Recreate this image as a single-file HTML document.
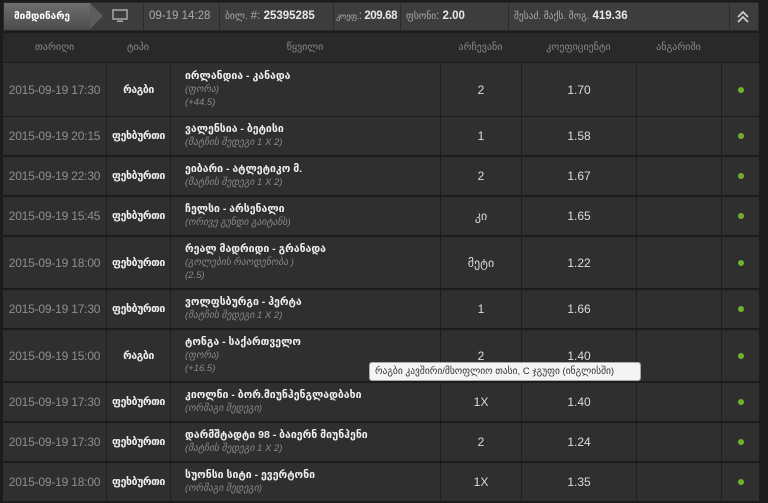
<!DOCTYPE html>
<html><head><meta charset="utf-8"><style>
*{margin:0;padding:0;box-sizing:border-box}
body{width:768px;height:503px;overflow:hidden;background:#1c1c1c;font-family:"Liberation Sans","DejaVu Sans",sans-serif;position:relative}
.top{position:absolute;left:3px;top:2px;width:756px;height:29px;background:#3d3d3d;border:1px solid #2a2a2a}
.tab{position:absolute;left:0;top:0;height:27px;width:86px;background:linear-gradient(#6e6e6e,#4c4c4c);color:#fff;font-size:10px;font-weight:bold;line-height:27px;padding-left:10px;white-space:nowrap}
.tab:after{content:"";position:absolute;right:-13px;top:0;border-left:13px solid #5c5c5c;border-top:13.5px solid transparent;border-bottom:13.5px solid transparent}
.it{position:absolute;top:0;height:27px;line-height:27px;font-size:11.5px;color:#aaa;border-left:1px solid #2c2c2c;padding-left:5px;white-space:nowrap;overflow:hidden}
.it s{text-decoration:none;font-size:9.5px}
.it b{color:#e8e8e8;font-weight:bold}
.hdr{position:absolute;left:3px;top:33px;width:756px;height:29px;background:#292929}
.hdr div{position:absolute;top:0;line-height:29px;text-align:center;font-size:10px;color:#8a8a8a}
.row{position:absolute;left:3px;width:756px;background:#1f1f1f}
.c{position:absolute;top:0;bottom:0;background:#2f2f2f;display:flex;align-items:center;justify-content:center;font-size:12px;color:#ddd;white-space:nowrap}
.d{color:#8e8e8e;font-size:12px;letter-spacing:-0.2px}
.t{color:#eee;font-size:10.5px;font-weight:bold;letter-spacing:-0.4px}
.e{padding-left:14px;flex-direction:column;align-items:flex-start;justify-content:center;line-height:13px}
.e .n{color:#eee;font-size:10.5px;font-weight:bold}
.e i{color:#8a8a8a;font-size:9.5px}
.dot{width:6px;height:6px;border-radius:50%;background:#6fb32a}
.tip{position:absolute;left:369px;top:362px;width:272px;height:19px;background:#f4f4f4;border:1px solid #aaa;border-radius:3px;font-size:9.5px;color:#333;line-height:17px;padding-left:5px;white-space:nowrap}
</style></head><body>
<div class="top">
<div class="tab">მიმდინარე</div>
<svg style="position:absolute;left:108px;top:6px" width="16" height="14"><rect x="1" y="1" width="14" height="9" fill="none" stroke="#aaa" stroke-width="1.5"/><rect x="5" y="11.5" width="6" height="1.5" fill="#aaa"/></svg>
<div class="it" style="left:139px;width:76px">09-19 14:28</div>
<div class="it" style="left:215px;width:114px"><s>ბილ.</s> #: <b>25395285</b></div>
<div class="it" style="left:329px;width:67px;padding-left:2px;letter-spacing:-0.4px"><s style="font-size:8.5px">კოეფ.</s>: <b>209.68</b></div>
<div class="it" style="left:396px;width:108px"><s>ფსონი</s>: <b>2.00</b></div>
<div class="it" style="left:504px;width:221px"><s>შესაძ. მაქს. მოგ.</s> <b>419.36</b></div>
<div class="it" style="left:725px;width:30px"></div>
<svg style="position:absolute;left:732px;top:7px" width="14" height="14"><path d="M2 7 L7 2 L12 7 M2 12 L7 7 L12 12" fill="none" stroke="#ccc" stroke-width="1.8"/></svg>
</div>
<div class="hdr">
<div style="left:0;width:103px">თარიღი</div>
<div style="left:103px;width:64px">ტიპი</div>
<div style="left:167px;width:270px">წყვილი</div>
<div style="left:437px;width:81px">არჩევანი</div>
<div style="left:518px;width:115px">კოეფიციენტი</div>
<div style="left:633px;width:85px">ანგარიში</div>
</div>
<div id="rows"></div>
<script>
var R=[
[63,53,"2015-09-19 17:30","რაგბი","ირლანდია - კანადა",["(ფორა)","(+44.5)"],"2","1.70"],
[117,38,"2015-09-19 20:15","ფეხბურთი","ვალენსია - ბეტისი",["(მატჩის შედეგი 1 X 2)"],"1","1.58"],
[157,38,"2015-09-19 22:30","ფეხბურთი","ეიბარი - ატლეტიკო მ.",["(მატჩის შედეგი 1 X 2)"],"2","1.67"],
[197,38,"2015-09-19 15:45","ფეხბურთი","ჩელსი - არსენალი",["(ორივე გუნდი გაიტანს)"],"კი","1.65"],
[237,51,"2015-09-19 18:00","ფეხბურთი","რეალ მადრიდი - გრანადა",["(გოლების რაოდენობა )","(2.5)"],"მეტი","1.22"],
[290,38,"2015-09-19 17:30","ფეხბურთი","ვოლფსბურგი - ჰერტა",["(მატჩის შედეგი 1 X 2)"],"1","1.66"],
[330,51,"2015-09-19 15:00","რაგბი","ტონგა - საქართველო",["(ფორა)","(+16.5)"],"2","1.40"],
[383,38,"2015-09-19 17:30","ფეხბურთი","კიოლნი - ბორ.მიუნჰენგლადბახი",["(ორმაგი შედეგი)"],"1X","1.40"],
[423,38,"2015-09-19 17:30","ფეხბურთი","დარმშტადტი 98 - ბაიერნ მიუნჰენი",["(მატჩის შედეგი 1 X 2)"],"2","1.24"],
[463,38,"2015-09-19 18:00","ფეხბურთი","სუონსი სიტი - ევერტონი",["(ორმაგი შედეგი)"],"1X","1.35"]];
var h="";
R.forEach(function(r){
h+='<div class="row" style="top:'+r[0]+'px;height:'+r[1]+'px">'+
'<div class="c d" style="left:0;width:103px">'+r[2]+'</div>'+
'<div class="c t" style="left:104px;width:63px">'+r[3]+'</div>'+
'<div class="c e" style="left:168px;width:269px"><span class="n">'+r[4]+'</span>'+r[5].map(function(x){return '<i>'+x+'</i>'}).join('')+'</div>'+
'<div class="c" style="left:438px;width:80px">'+r[6]+'</div>'+
'<div class="c" style="left:519px;width:114px">'+r[7]+'</div>'+
'<div class="c" style="left:634px;width:84px"></div>'+
'<div class="c" style="left:719px;width:37px"><span class="dot"></span></div></div>';
});
document.getElementById("rows").innerHTML=h;
</script>
<div class="tip">რაგბი კავშირი/მსოფლიო თასი, C ჯგუფი (ინგლისში)</div>
</body></html>
